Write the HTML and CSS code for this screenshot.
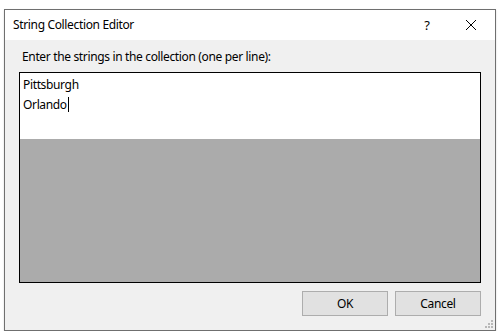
FILE: index.html
```html
<!DOCTYPE html>
<html>
<head>
<meta charset="utf-8">
<link rel="stylesheet" href="styles.css">
</head>
<body>
<div class="window">
  <div class="titlebar">
    <span class="title">String Collection Editor</span>
    <span class="help">?</span>
    <span class="close">
      <svg width="12" height="12" viewBox="0 0 12 12"><path d="M1 1 L11 11 M11 1 L1 11" stroke="#000" stroke-width="1" fill="none"/></svg>
    </span>
  </div>
  <div class="content">
    <div class="label">Enter the strings in the collection (one per line):</div>
    <div class="textbox">
      <div class="lines">
        <div class="line">Pittsburgh</div>
        <div class="line">Orlando<span class="caret"></span></div>
      </div>
      <div class="empty"></div>
    </div>
    <div class="buttons">
      <div class="btn">OK</div>
      <div class="btn">Cancel</div>
    </div>
    <div class="grip">
      <svg width="9" height="9" viewBox="0 0 9 9" fill="#b8b8b8">
        <rect x="6" y="0" width="2" height="2"/>
        <rect x="3" y="3" width="2" height="2"/><rect x="6" y="3" width="2" height="2"/>
        <rect x="0" y="6" width="2" height="2"/><rect x="3" y="6" width="2" height="2"/><rect x="6" y="6" width="2" height="2"/>
      </svg>
    </div>
  </div>
</div>
</body>
</html>
```
FILE: styles.css
```css
html, body {
  margin: 0;
  padding: 0;
  background: #ffffff;
}
body {
  padding: 9px 0 0 4px;
  font-family: "Noto Sans", "Open Sans", sans-serif;
  font-size: 12px;
  letter-spacing: -0.35px;
  color: #000;
}
.window {
  width: 490px;
  height: 320px;
  border: 1px solid #6f6f6f;
  background: #f0f0f0;
  box-shadow: 0 1px 2px rgba(0,0,0,0.15);
  display: flex;
  flex-direction: column;
}
.titlebar {
  height: 30px;
  background: #ffffff;
  display: flex;
  align-items: center;
  padding-left: 8px;
  flex: none;
}
.title {
  flex: 1;
  line-height: 16px;
  margin-top: -1px;
}
.help {
  width: 20px;
  text-align: center;
  margin-right: 28px;
  font-size: 13px;
  letter-spacing: 0;
}
.close {
  width: 12px;
  height: 12px;
  margin-right: 18px;
  display: flex;
}
.content {
  flex: 1;
  position: relative;
  padding: 0 14px;
}
.label {
  padding-left: 3px;
  height: 16px;
  line-height: 16px;
  margin-top: 9px;
  margin-bottom: 7px;
}
.textbox {
  height: 209px;
  border: 1px solid #000;
  display: flex;
  flex-direction: column;
}
.lines {
  height: 66px;
  background: #fff;
  padding-left: 3px;
  padding-top: 2px;
  box-sizing: border-box;
}
.line {
  line-height: 20px;
  height: 20px;
}
.caret {
  display: inline-block;
  width: 1px;
  height: 15px;
  background: #000;
  vertical-align: -3px;
  margin-left: 1px;
}
.empty {
  flex: 1;
  background: #ababab;
}
.buttons {
  display: flex;
  justify-content: flex-end;
  gap: 7px;
  margin-top: 8px;
}
.btn {
  width: 84px;
  height: 23px;
  border: 1px solid #adadad;
  background: #e1e1e1;
  text-align: center;
  line-height: 23px;
}
.grip {
  position: absolute;
  right: 1px;
  bottom: 1px;
  width: 9px;
  height: 9px;
}
.grip svg { display: block; }
```
